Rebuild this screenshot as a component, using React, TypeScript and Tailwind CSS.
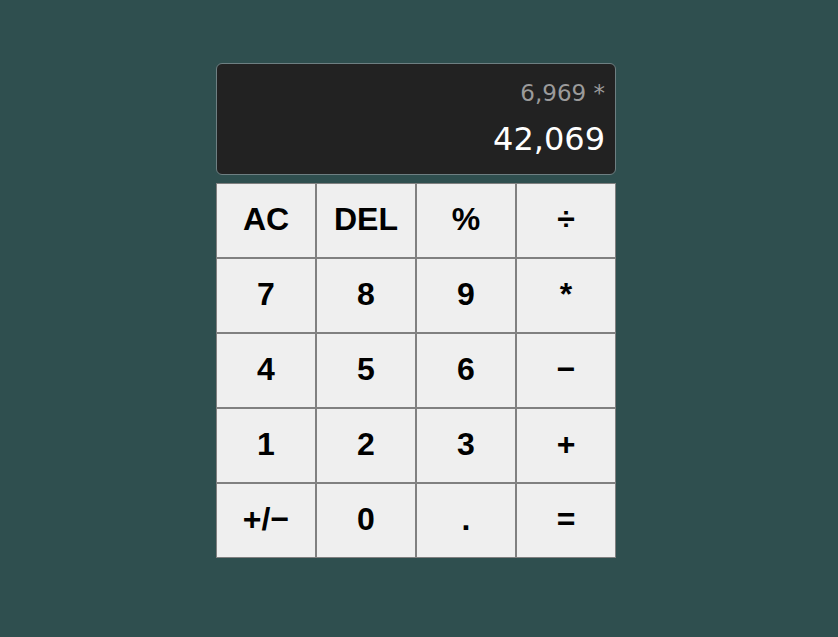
const keys: string[] = [
  "AC", "DEL", "%", "÷",
  "7", "8", "9", "*",
  "4", "5", "6", "−",
  "1", "2", "3", "+",
  "+/−", "0", ".", "=",
];

export default function App() {
  return (
    <div className="min-h-[637px] bg-[#2f4f4f] pt-[63px] pr-[6px] flex justify-center items-start">
      <div className="w-[400px] flex flex-col gap-2">
        <div className="h-[112px] bg-[#222222] border border-[#6e7f82] rounded-md pt-[18px] pb-[19px] pr-[10px] flex flex-col items-end gap-[18px] font-['DejaVu_Sans',sans-serif]">
          <div className="text-[23px] leading-none text-[#9b9b9b]">6,969 *</div>
          <div className="text-[32px] leading-none text-white">42,069</div>
        </div>
        <div className="grid grid-cols-4">
          {keys.map((k) => (
            <button
              key={k}
              className="h-[75px] pb-[3px] border border-[#808080] bg-[#efefef] text-black text-[32px] font-bold font-['Liberation_Sans',Arial,sans-serif] flex items-center justify-center"
            >
              {k}
            </button>
          ))}
        </div>
      </div>
    </div>
  );
}
